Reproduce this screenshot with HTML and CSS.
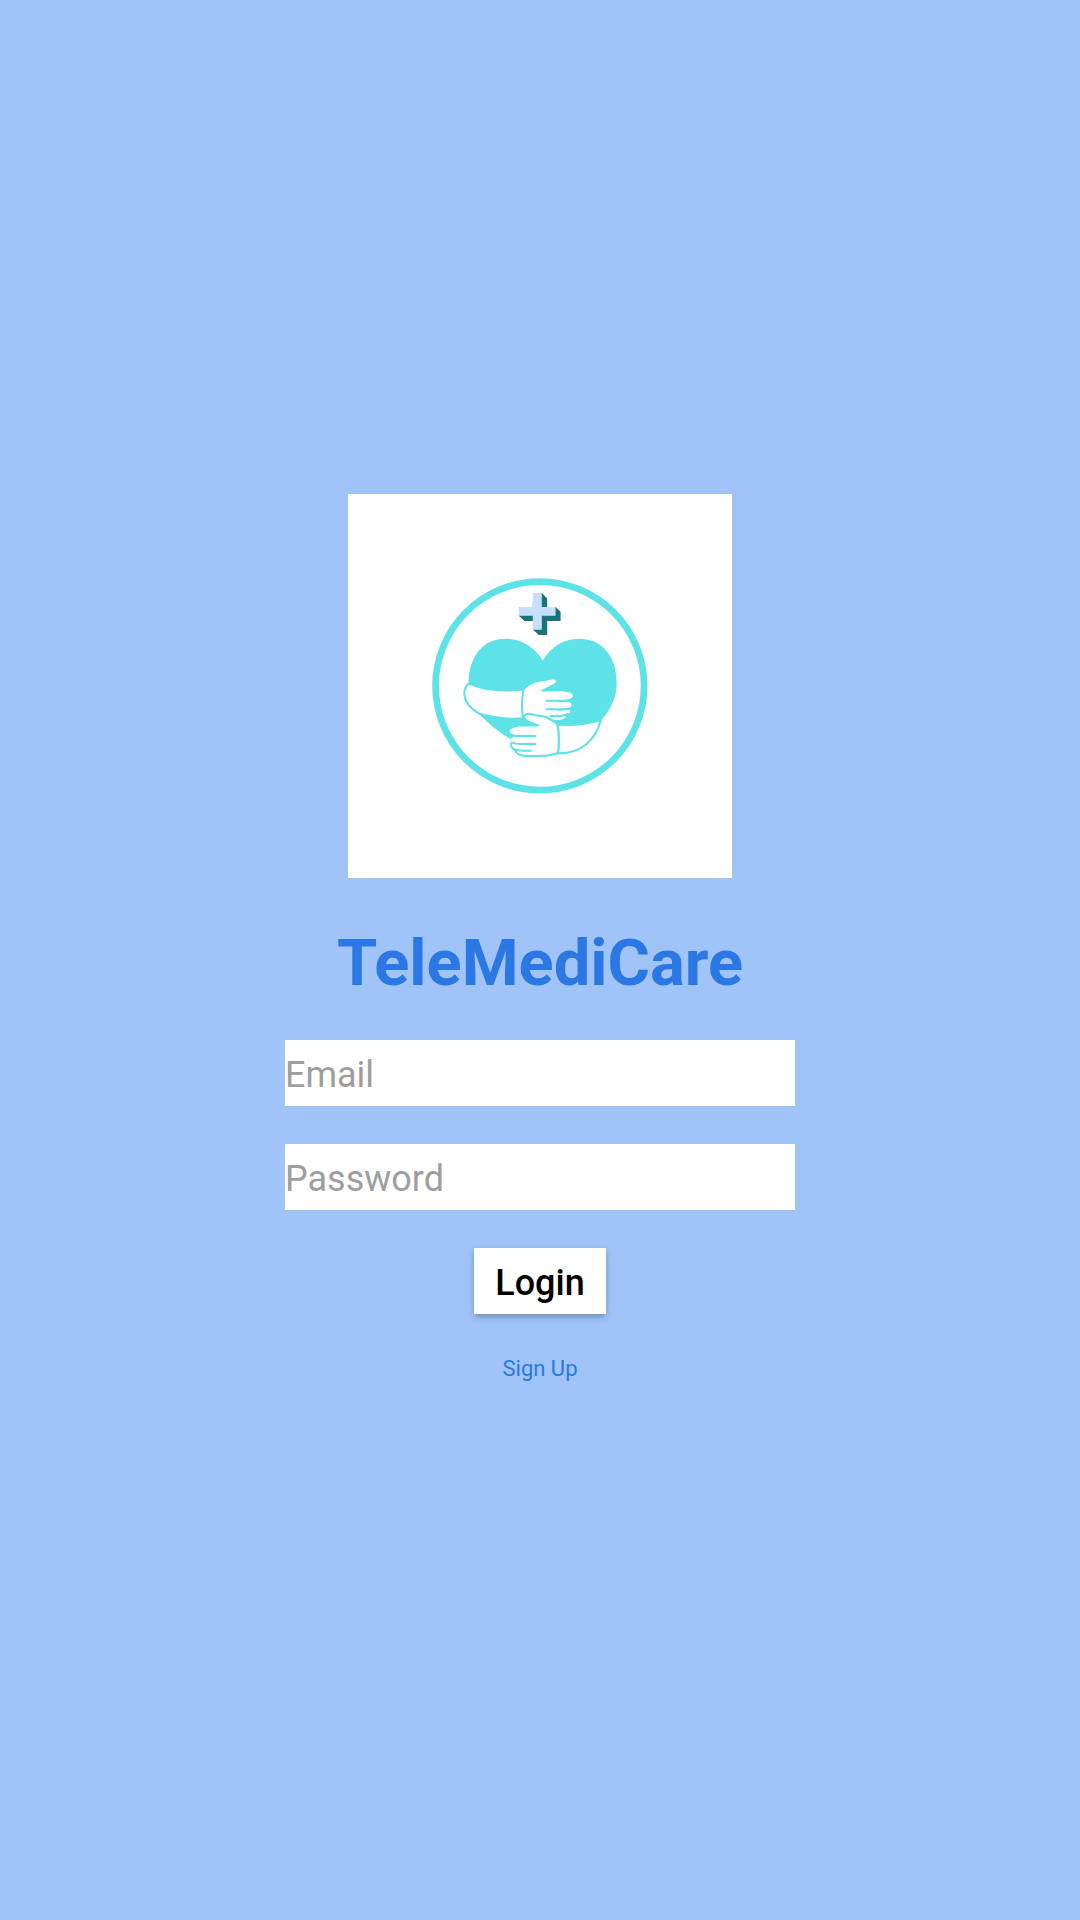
FILE: index.html
```html
<!DOCTYPE html>
<html lang="en">
<head>
  <meta charset="utf-8">
  <meta name="viewport" content="width=device-width, initial-scale=1">
  <title>TeleMediCare</title>
  <link rel="stylesheet" href="styles.css">
</head>
<body>
  <main class="login">
    <svg class="logo" viewBox="24 27 1149 1149" role="img" aria-label="TeleMediCare logo">
      <rect class="logo-back" x="24" y="27" width="1149" height="1149"/>
      <circle class="logo-ring" cx="598" cy="601" r="312"/>
      <path class="logo-shade" d="M604 323L620 340V366H646L660 379V407H620V449H595L578 433V407H552L535 391Z"/>
      <path class="logo-white" d="M535 323H577V365H535Z"/>
      <path class="logo-cross" d="M577 323H604V365H645V391H604V433H577V391H535V365H577Z"/>
      <!-- heart -->
      <path class="logo-fill" d="M607 525C630 485 670 460 715 460C790 460 828 520 828 592C828 640 808 672 783 703C765 765 710 806 650 804C560 800 470 745 416 684L385 596C385 515 425 460 497 460C545 460 583 487 607 525Z"/>
      <!-- right arm and hand -->
      <path class="logo-line" d="M651 717C696 721 738 716 780 703C765 764 720 805 652 803C656 775 656 745 651 717Z"/>
      <!-- left arm -->
      <path class="logo-line" d="M386 594C434 615 492 618 549 612C544 640 543 670 548 698C500 702 455 696 416 684C384 665 371 642 372 620C373 609 378 600 386 594Z"/>
      <path class="logo-white" d="M552 611C569 597 584 589 603 588C616 587 628 582 638 582C647 582 649 589 642 594L602 614C601 616 603 618 606 618C634 615 661 616 684 620C701 624 700 635 688 640C678 644 668 645 650 644V650C665 650 677 649 687 650C697 655 694 664 684 668C671 671 661 671 650 671V675C664 676 678 673 686 673C693 677 688 685 678 688L650 690L676 692C675 700 661 704 641 703L621 693L600 690L555 686L550 696C546 668 547 640 552 611Z"/>
      <path class="logo-stroke" d="M618 646H664Q678 646 689 643M618 671H660Q676 672 686 669M630 691H660Q672 690 682 685"/>
      <path class="logo-lower" d="M507 770C518 799 534 809 556 811H608C625 810 638 807 650 803C655 775 655 745 649 716C633 704 622 695 600 692C584 691 575 684 562 687C553 689 552 697 560 703L598 719C597 723 591 724 578 723H546C525 723 508 728 508 738C510 745 519 750 532 751C518 752 511 757 511 763Z"/>
      <path class="logo-stroke" d="M551 698C549 686 561 683 573 686C583 689 590 691 602 691C624 694 636 706 650 714M650 714C656 745 656 775 652 803C635 807 625 811 600 811H555C540 810 528 804 524 794C515 788 511 781 512 774M514 748Q522 752 534 751H585M514 771Q526 775 540 775H584M524 791Q536 795 548 795H572"/>
    </svg>
    <h1 class="title">TeleMediCare</h1>
    <form class="form">
      <input class="field" type="email" placeholder="Email" aria-label="Email">
      <input class="field" type="password" placeholder="Password" aria-label="Password">
      <button class="submit" type="submit">Login</button>
      <a class="signup" href="#signup">Sign Up</a>
    </form>
  </main>
</body>
</html>
```
FILE: styles.css
```css
* {
  box-sizing: border-box;
}

body {
  margin: 0;
  background: #a0c4f8;
  font-family: Roboto, sans-serif;
}

.login {
  display: flex;
  flex-direction: column;
  align-items: center;
  justify-content: center;
  gap: 38px;
  min-height: 100vh;
  padding: 38px 0;
}

.logo {
  display: block;
  width: 384px;
  max-width: 100%;
}

.logo-back,
.logo-white,
.logo-lower {
  fill: #fff;
}

.logo-ring {
  fill: none;
  stroke: #5ce2e7;
  stroke-width: 20;
}

.logo-shade {
  fill: #187577;
}

.logo-cross {
  fill: #c7dff8;
}

.logo-fill {
  fill: #5ce2e7;
}

.logo-line {
  fill: #fff;
  stroke: #5ce2e7;
  stroke-width: 6;
  stroke-linejoin: round;
}

.logo-stroke {
  fill: none;
  stroke: #5ce2e7;
  stroke-width: 6;
  stroke-linecap: round;
  stroke-linejoin: round;
}

.title {
  margin: 0;
  padding-top: 8px;
  color: #2b78e4;
  font-size: 65px;
  font-weight: 700;
  line-height: 78px;
}

.form {
  display: flex;
  flex-direction: column;
  align-items: center;
  gap: 38px;
  width: 100%;
  max-width: 510px;
  padding-bottom: 40px;
}

.field {
  width: 100%;
  height: 66px;
  padding: 4px 0 0;
  border: 0;
  border-radius: 0;
  background: #fff;
  color: #000;
  font: 400 36px Roboto, sans-serif;
}

.field::placeholder {
  color: #9e9e9e;
  opacity: 1;
}

.submit {
  height: 66px;
  padding: 4px 21px 0;
  border: 0;
  background: #fff;
  box-shadow: 0 3px 6px rgba(0, 0, 0, 0.27);
  color: #000;
  font: 500 36px Roboto, sans-serif;
}

.signup {
  color: #2b78e4;
  font-size: 22px;
  line-height: 34px;
  text-decoration: none;
}
```
